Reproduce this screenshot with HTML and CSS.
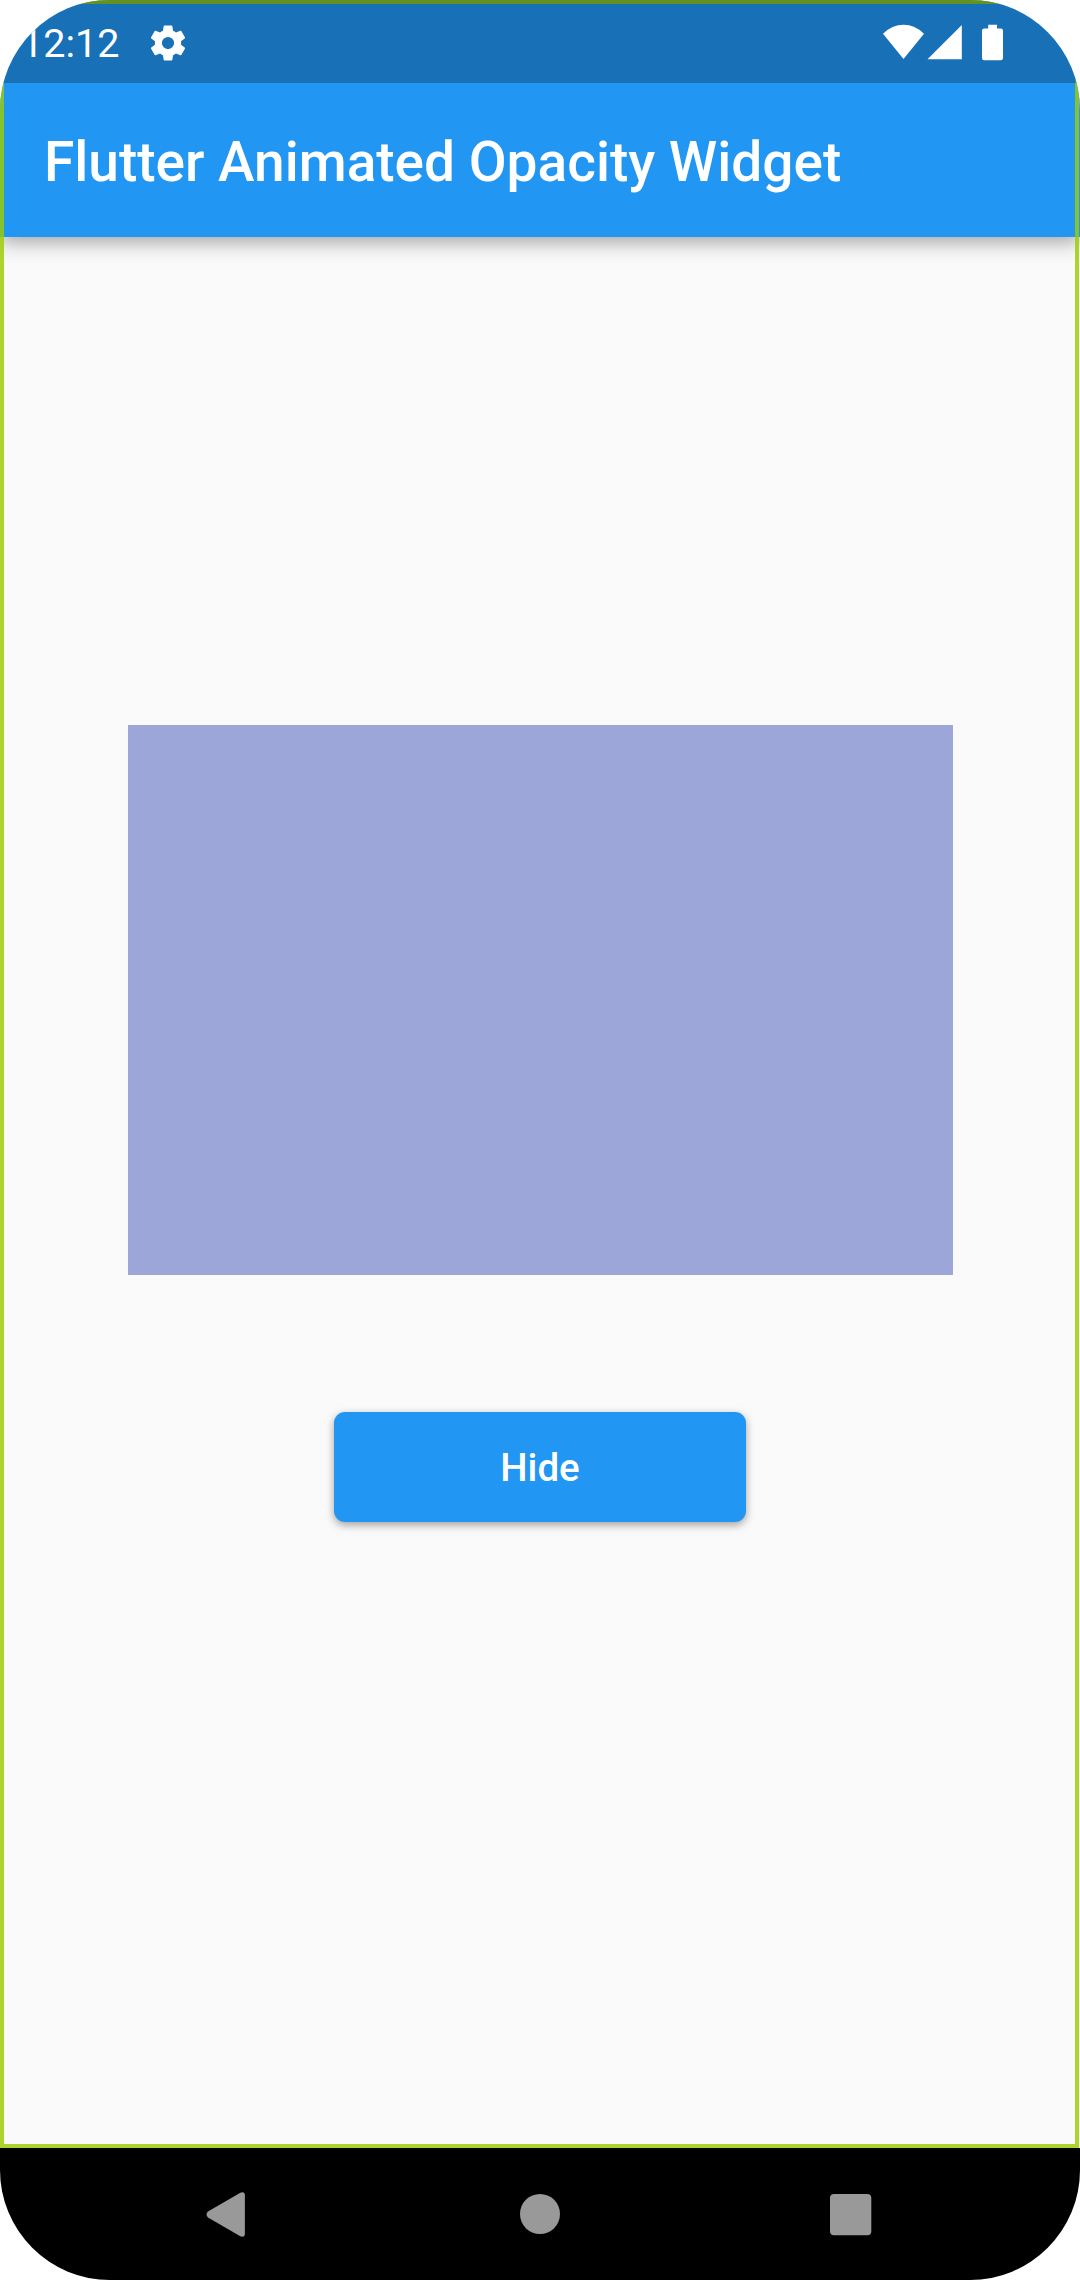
FILE: index.html
```
<!DOCTYPE html>
<html lang="en">
<head>
<meta charset="utf-8">
<title>Flutter Animated Opacity Widget</title>
<link rel="stylesheet" href="styles.css">
</head>
<body>
<div class="device">
  <div class="screen">
    <div class="status-bar">
      <span class="clock">12:12</span>
      <svg class="gear" width="42" height="42" viewBox="0 0 24 24"><path fill="#fff" fill-rule="evenodd" d="M19.5 12c0-.34-.03-.66-.07-.98l2.11-1.65c.19-.15.24-.42.12-.64l-2-3.46c-.12-.22-.39-.3-.61-.22l-2.49 1c-.52-.4-1.08-.73-1.69-.98l-.38-2.65A.49.49 0 0 0 14 2h-4c-.25 0-.46.18-.49.42l-.38 2.65c-.61.25-1.17.59-1.69.98l-2.49-1c-.23-.09-.49 0-.61.22l-2 3.46c-.13.22-.07.49.12.64l2.11 1.65a7.9 7.9 0 0 0 0 1.96l-2.11 1.65c-.19.15-.24.42-.12.64l2 3.46c.12.22.39.3.61.22l2.49-1c.52.4 1.08.73 1.69.98l.38 2.65c.03.24.24.42.49.42h4c.25 0 .46-.18.49-.42l.38-2.65c.61-.25 1.17-.59 1.69-.98l2.49 1c.23.09.49 0 .61-.22l2-3.46c.12-.22.07-.49-.12-.64l-2.11-1.65c.04-.32.07-.65.07-.98zM12 15.5a3.500 3.500 0 1 1 0-7 3.500 3.500 0 0 1 0 7z"/></svg>
      <svg class="indicators" width="122" height="38" viewBox="882 24.500 122 38" fill="#fff">
        <path d="M883 34.300Q892 25.300 903.500 25.300T924 34.300L903.500 59.500z"/>
        <path d="M961.800 25.500V59.700H927.500z"/>
        <path d="M988.200 25.200h8.800V29h3.800q2.200 0 2.200 2.200V58.600q0 2.200-2.200 2.200H984.200q-2.200 0-2.200-2.200V31.200q0-2.200 2.200-2.200h4z"/>
      </svg>
    </div>
    <header class="app-bar"><h1 class="title">Flutter Animated Opacity Widget</h1></header>
    <main class="content">
      <div class="box"></div>
      <button class="toggle" type="button">Hide</button>
    </main>
    <div class="outline"></div>
  </div>
  <nav class="nav-bar">
    <svg class="nav-icons" width="1080" height="132" viewBox="0 0 1080 132" fill="#999">
      <path d="M208 63.500L240.300 44.700Q244.900 43.200 244.900 47.500V85.500Q244.900 89.800 240.300 88.300L208 69.500Q205 66.500 208 63.500z"/>
      <circle cx="540" cy="66" r="20"/>
      <rect x="830" y="46" width="41.300" height="41.300" rx="4"/>
    </svg>
  </nav>
</div>
</body>
</html>
```
FILE: styles.css
```
* { box-sizing: border-box; }
body {
  margin: 0;
  background: #fff;
  font-family: Roboto, "Liberation Sans", sans-serif;
}
.device {
  display: flex;
  flex-direction: column;
  width: 1080px;
  height: 2280px;
  border-radius: 110px;
  overflow: hidden;
}
.screen {
  position: relative;
  display: flex;
  flex-direction: column;
  flex: 1;
  background: #fafafa;
}
/* Translucent system bar, drawn above the app and its outline */
.status-bar {
  position: relative;
  z-index: 3;
  display: flex;
  align-items: center;
  height: 83px;
  padding: 3px 76px 0 21px;
  background: rgba(0, 0, 0, 0.25);
  color: #fff;
}
.clock { font-size: 39.500px; line-height: 46px; padding-top: 1px; }
.gear { margin-left: 28px; }
.indicators { margin-left: auto; }
.app-bar {
  position: relative;
  z-index: 1;
  display: flex;
  align-items: center;
  height: 237px;
  margin-top: -83px;
  padding: 87px 44px 0;
  background: #2196f3;
  box-shadow: 0 4px 20px rgba(0, 0, 0, 0.39);
}
.title {
  margin: 0;
  color: #fff;
  font-size: 55px;
  font-weight: 500;
  line-height: 64px;
}
.content {
  display: flex;
  flex: 1;
  flex-direction: column;
  align-items: center;
  padding-top: 488px;
}
.box {
  width: 825px;
  height: 550px;
  margin-left: 1px;
  background: #9da6d9;
}
.toggle {
  width: 412px;
  height: 110px;
  margin-top: 137px;
  padding: 2px 0 0;
  border: 0;
  border-radius: 11px;
  background: #2196f3;
  color: #fff;
  font: 500 38.500px/46px Roboto, "Liberation Sans", sans-serif;
  box-shadow: 0 3px 9px rgba(0, 0, 0, 0.36);
}
.outline {
  position: absolute;
  inset: 0 1px 0 0;
  z-index: 2;
  border: 4px solid rgba(154, 205, 0, 0.82);
}
.nav-bar {
  height: 132px;
  background: #000;
}
.nav-icons { display: block; }
```
